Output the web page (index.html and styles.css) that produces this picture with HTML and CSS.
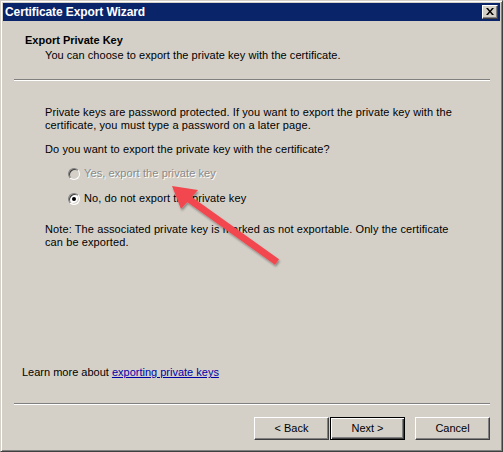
FILE: index.html
```html
<!DOCTYPE html>
<html>
<head>
<meta charset="utf-8">
<link rel="stylesheet" href="styles.css">
</head>
<body>
<div class="window">
  <div class="titlebar">
    <span class="title">Certificate Export Wizard</span>
    <span class="close"><svg width="8" height="7" viewBox="0 0 8 7"><path d="M0 0h2l2 2.5L6 0h2L5 3.5 8 7H6L4 4.5 2 7H0l3-3.5z" fill="#000"/></svg></span>
  </div>
  <div class="content">
    <div class="header">
      <div class="h-title">Export Private Key</div>
      <div class="h-sub">You can choose to export the private key with the certificate.</div>
    </div>
    <div class="sep"></div>
    <div class="body">
      <p class="p1">Private keys are password protected. If you want to export the private key with the<br>certificate, you must type a password on a later page.</p>
      <p class="q">Do you want to export the private key with the certificate?</p>
      <div class="options">
        <div class="opt disabled"><span class="radio"></span><span>Yes, export the private key</span></div>
        <div class="opt"><span class="radio checked"></span><span>No, do not export the private key</span></div>
      </div>
      <p class="note">Note: The associated private key is marked as not exportable. Only the certificate<br>can be exported.</p>
    </div>
    <div class="learn">Learn more about <a class="link">exporting private keys</a></div>
    <div class="sep"></div>
    <div class="buttons">
      <span class="btn">&lt; Back</span>
      <span class="btn default">Next &gt;</span>
      <span class="btn cancel">Cancel</span>
    </div>
  </div>
  <svg class="arrow" width="503" height="452" viewBox="0 0 503 452">
    <defs>
      <filter id="sh" x="-20%" y="-20%" width="140%" height="140%">
        <feDropShadow dx="1" dy="2" stdDeviation="1.2" flood-color="#000" flood-opacity="0.35"/>
      </filter>
    </defs>
    <g filter="url(#sh)" fill="#f2474f" stroke="none">
      <line x1="277" y1="262" x2="186" y2="197" stroke="#f2474f" stroke-width="7"/>
      <polygon points="172,186 198,190 181,209"/>
    </g>
  </svg>
</div>
</body>
</html>
```

FILE: styles.css
```css
* { box-sizing: border-box; }
html, body {
  margin: 0;
  padding: 0;
  background: #d4d0c8;
}
body {
  font-family: "Liberation Sans", Arial, sans-serif;
  font-size: 11px;
  line-height: 13px;
  color: #000;
}
.window {
  position: relative;
  width: 503px;
  height: 452px;
  background: #d4d0c8;
  border: 1px solid;
  border-color: #d4d0c8 #404040 #404040 #d4d0c8;
  box-shadow: inset 1px 1px 0 #ffffff, inset -1px -1px 0 #808080;
  padding: 2px;
  display: flex;
  flex-direction: column;
}
.titlebar {
  height: 18px;
  background: #0a246a;
  display: flex;
  align-items: center;
  justify-content: space-between;
  padding: 0 2px 0 2px;
}
.title {
  color: #fff;
  font-weight: bold;
  font-size: 12px;
  line-height: 14px;
  letter-spacing: -0.1px;
}
.close {
  width: 16px;
  height: 14px;
  background: #d4d0c8;
  border: 1px solid;
  border-color: #fff #404040 #404040 #fff;
  box-shadow: inset -1px -1px 0 #808080;
  display: flex;
  align-items: center;
  justify-content: center;
  padding-bottom: 1px;
}
.close svg { display: block; }
.content {
  flex: 1;
  display: flex;
  flex-direction: column;
}
.header {
  height: 58px;
  padding: 13px 0 0 22px;
}
.h-title {
  font-weight: bold;
}
.h-sub {
  margin-top: 2px;
  padding-left: 20px;
  letter-spacing: 0.05px;
}
.sep {
  height: 2px;
  margin: 0 10px 0 11px;
  border-top: 1px solid #808080;
  border-bottom: 1px solid #ffffff;
}
.body {
  flex: 1;
  padding: 25px 0 0 42px;
  letter-spacing: 0.1px;
}
.body p { margin: 0; }
.q { margin-top: 11px !important; }
.options {
  margin-top: 11px;
  padding-left: 23px;
  display: flex;
  flex-direction: column;
  gap: 12px;
}
.opt {
  display: flex;
  align-items: center;
  height: 13px;
  gap: 4px;
}
.radio {
  position: relative;
  width: 12px;
  height: 12px;
  border-radius: 50%;
  border: 1px solid;
  border-color: #808080 #ffffff #ffffff #808080;
  background: #fff;
  box-shadow: inset 1px 1px 0 #404040, inset -1px -1px 0 #d4d0c8;
}
.disabled .radio {
  background: #d4d0c8;
}
.disabled span:last-child {
  color: #8a8a8a;
  text-shadow: 1px 1px 0 #ffffff;
}
.radio.checked::after {
  content: "";
  position: absolute;
  left: 3px;
  top: 3px;
  width: 4px;
  height: 4px;
  border-radius: 50%;
  background: #000;
}
.note { margin-top: 18px !important; }
.learn {
  padding-left: 19px;
  margin-bottom: 24px;
}
.link {
  color: #0000a8;
  text-decoration: underline;
}
.buttons {
  display: flex;
  justify-content: flex-end;
  margin-top: 12px;
  padding: 0 10px 9px 0;
}
.btn {
  width: 75px;
  height: 23px;
  display: flex;
  align-items: center;
  justify-content: center;
  border: 1px solid;
  border-color: #fff #404040 #404040 #fff;
  box-shadow: inset -1px -1px 0 #808080;
  background: #d4d0c8;
}
.btn.default {
  margin-left: 1px;
  border: 1px solid #000;
  box-shadow: inset 1px 1px 0 #fff, inset -1px -1px 0 #404040, inset -2px -2px 0 #808080;
}
.btn.cancel {
  margin-left: 10px;
}
.arrow {
  position: absolute;
  left: -1px;
  top: -1px;
  pointer-events: none;
}
```
